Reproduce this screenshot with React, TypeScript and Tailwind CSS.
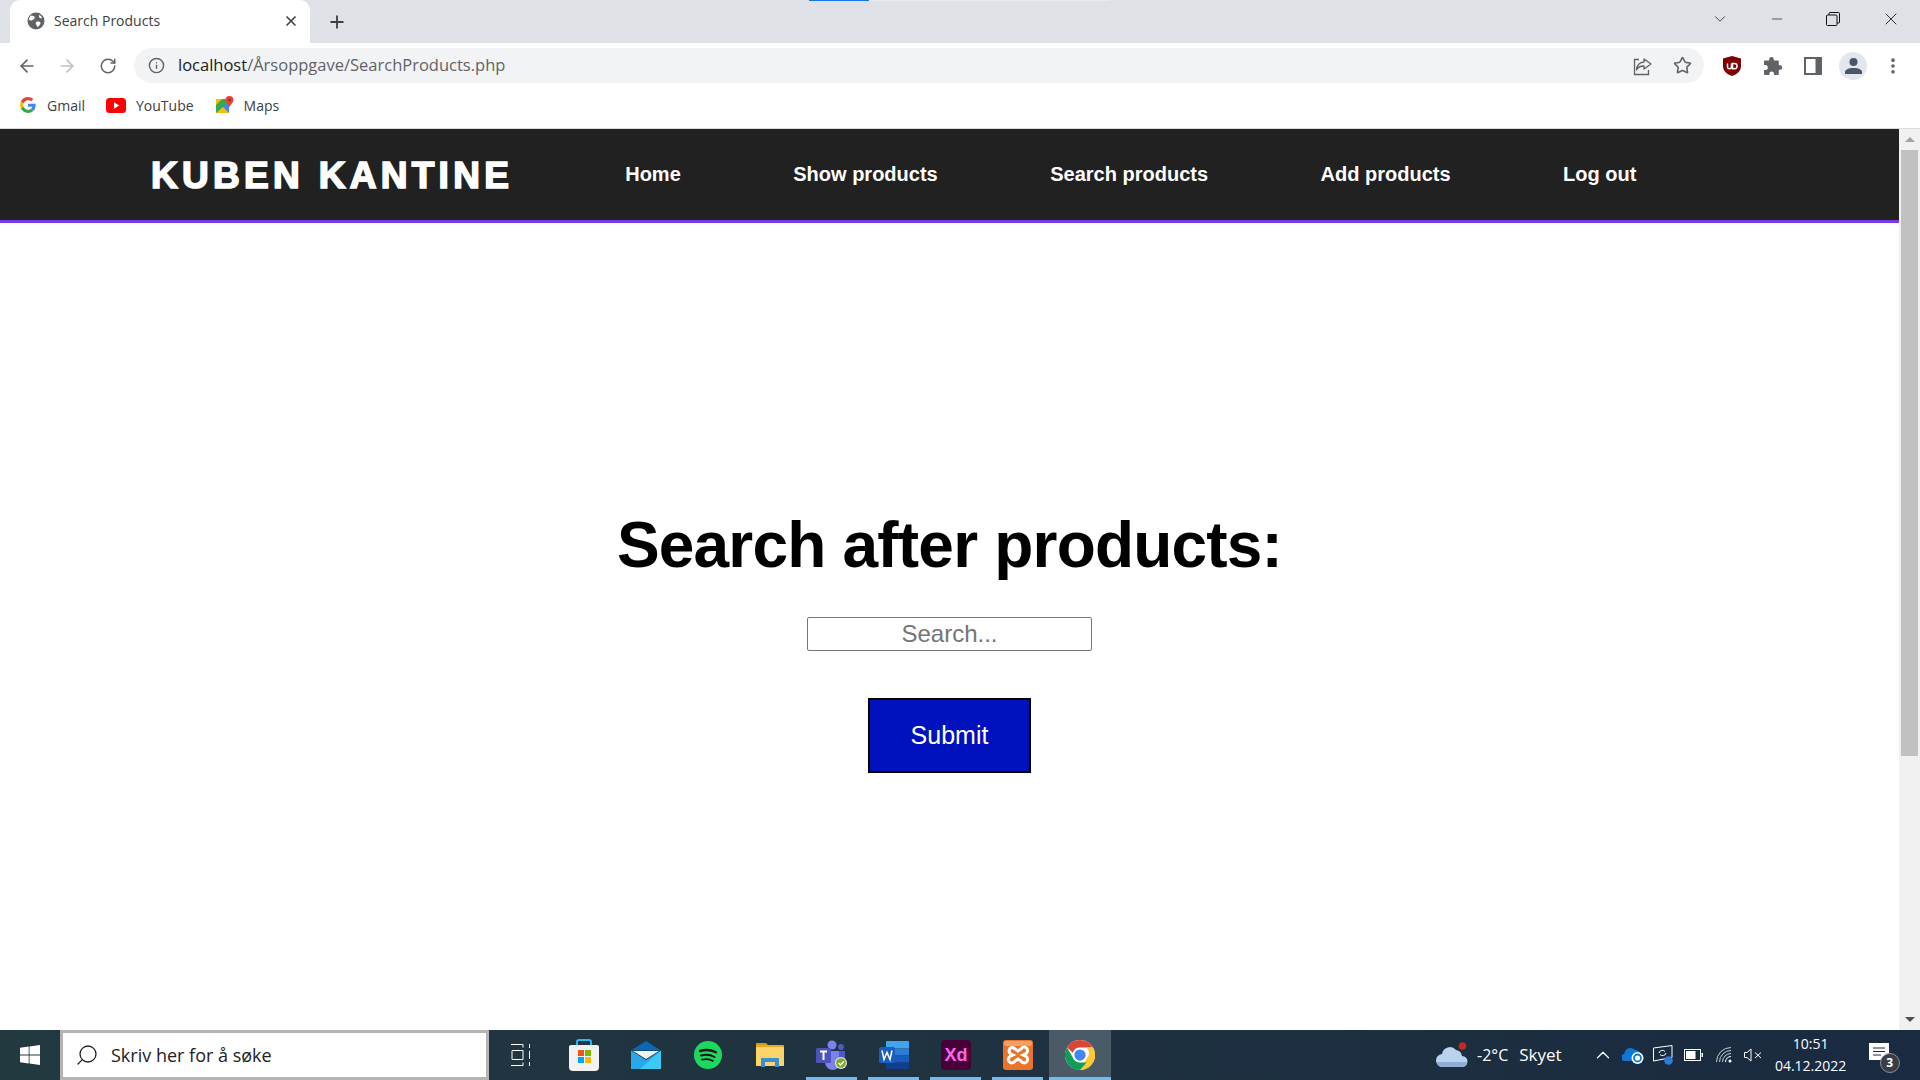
import { ArrowLeft, ArrowRight, RotateCw, Plus, X, Star, Info, ChevronDown, ChevronUp, Minus, MoreVertical, Search } from "lucide-react";

const uiFont = "font-['Open_Sans','Noto_Sans',sans-serif]";

function Globe() {
  return (
    <svg width="18" height="18" viewBox="0 0 18 18">
      <circle cx="9" cy="9" r="8.5" fill="#5f6368" />
      <path d="M4 3.5c2 .2 3.5.8 4 2-.3 1.400-1.600 1.500-2.500 2.500C4.600 9 3 8.500 1.800 7.500 2.200 5.800 3 4.500 4 3.500zM10 9.500c1.500-.3 3 .2 3.500 1.200 0 1.500-1.200 3.300-3 4.300-.8-1-1-2-1.500-3-.6-1 0-2 1-2.500zM12.500 2.800c1.200.7 2.200 2 2.600 3.400-1 .3-2 0-2.800-.8-.5-.8-.3-1.800.2-2.600z" fill="#fff" />
    </svg>
  );
}

function GoogleG() {
  return (
    <svg width="16" height="16" viewBox="0 0 48 48">
      <path fill="#EA4335" d="M24 9.500c3.500 0 6.700 1.200 9.200 3.600l6.900-6.900C35.900 2.400 30.500 0 24 0 14.600 0 6.500 5.400 2.600 13.200l8 6.200C12.500 13.700 17.800 9.500 24 9.500z" />
      <path fill="#4285F4" d="M47 24.500c0-1.600-.1-3.100-.4-4.500H24v9h12.900c-.6 3-2.200 5.500-4.700 7.200l7.700 6c4.500-4.200 7.100-10.300 7.100-17.700z" />
      <path fill="#FBBC05" d="M10.500 28.600c-.5-1.400-.8-3-.8-4.600s.3-3.200.8-4.600l-8-6.200C.9 16.500 0 20.100 0 24s.9 7.500 2.600 10.800l7.900-6.200z" />
      <path fill="#34A853" d="M24 48c6.500 0 11.900-2.100 15.900-5.800l-7.700-6c-2.100 1.400-4.900 2.300-8.200 2.300-6.200 0-11.500-4.200-13.400-9.900l-8 6.200C6.500 42.600 14.600 48 24 48z" />
    </svg>
  );
}

function YouTube() {
  return (
    <svg width="20" height="15" viewBox="0 0 20 15">
      <rect width="20" height="15" rx="3.500" fill="#f00" />
      <path d="M8 4.300v6.400l5.400-3.200z" fill="#fff" />
    </svg>
  );
}

function Maps() {
  return (
    <svg width="18" height="18" viewBox="0 0 18 18">
      <path d="M0 3h13v14H0z" fill="#34a853" />
      <path d="M0 3h6L0 9z" fill="#fbbc05" />
      <path d="M0 17l13-11v11z" fill="#4285f4" />
      <path d="M0 17l7-6 6 6z" fill="#fbbc05" />
      <path d="M13.500 0A4 4 0 0 0 9.500 4c0 2.500 3 4 4 7.500 1-3.500 4-5 4-7.500a4 4 0 0 0-4-4z" fill="#ea4335" />
      <circle cx="13.500" cy="4" r="1.400" fill="#a52714" />
    </svg>
  );
}

function Share() {
  return (
    <svg width="20" height="20" viewBox="0 0 20 20" fill="none" stroke="#5f6368" strokeWidth="1.300">
      <path d="M11 3l7 5-7 5v-3C7 10 4.500 11.500 3.500 14 3.500 9 7 6.200 11 6z" strokeLinejoin="round" />
      <path d="M6 3.500H1.500v15h14V14" />
    </svg>
  );
}

function UBlock() {
  return (
    <svg width="18" height="20" viewBox="0 0 18 20">
      <path d="M9 0l9 2.500V10c0 5-4 8.500-9 10-5-1.500-9-5-9-10V2.500z" fill="#800000" />
      <path d="M4.500 7.500v3.200a2 2 0 0 0 4 0V7.500M9.500 7.500h2a2.500 2.500 0 0 1 0 5.200h-2z" fill="none" stroke="#fff" strokeWidth="1.500" />
    </svg>
  );
}

function Puzzle() {
  return (
    <svg width="18" height="18" viewBox="0 0 18 18">
      <path d="M7.500 0a2.300 2.300 0 0 1 2.300 2.300V3.500H14a.8.800 0 0 1 .8.800v3.900H16a2.300 2.300 0 0 1 0 4.600h-1.200V17a1 1 0 0 1-1 1H10v-1.300a2.300 2.300 0 0 0-4.600 0V18H1a1 1 0 0 1-1-1v-4h1.300a2.500 2.500 0 0 0 0-5H0V4.300a.8.800 0 0 1 .8-.8h4.400V2.300A2.300 2.300 0 0 1 7.500 0z" fill="#5f6368" />
    </svg>
  );
}

function SidePanel() {
  return (
    <svg width="18" height="18" viewBox="0 0 18 18">
      <rect width="18" height="18" fill="#5f6368" />
      <rect x="2" y="2" width="9.500" height="14" fill="#fff" />
    </svg>
  );
}

function Avatar() {
  return (
    <div className="flex h-7 w-7 items-center justify-center rounded-full bg-[#e3e6ec]">
      <svg width="17" height="16" viewBox="0 0 17 16">
        <circle cx="8.500" cy="4" r="4" fill="#4a5568" />
        <path d="M0 16v-2c0-2.500 4-4 8.500-4s8.500 1.500 8.500 4v2z" fill="#4a5568" />
      </svg>
    </div>
  );
}

function Restore() {
  return (
    <svg width="14" height="14" viewBox="0 0 14 14" fill="none" stroke="#111" strokeWidth="1">
      <rect x="0.500" y="3" width="10.500" height="10.500" rx="1" />
      <path d="M3 3V1.500a1 1 0 0 1 1-1h8.500a1 1 0 0 1 1 1V10a1 1 0 0 1-1 1H11" />
    </svg>
  );
}

function WindowsLogo() {
  return (
    <svg width="20" height="20" viewBox="0 0 20 20" fill="#fff">
      <path d="M0 2.800l8.700-1.200v8H0zM9.500 1.500L20 0v9.600H9.500zM0 10.400h8.700v8L0 17.200zM9.500 10.400H20V20L9.500 18.500z" />
    </svg>
  );
}

function TaskView() {
  return (
    <svg width="20" height="22" viewBox="0 0 20 22" fill="none" stroke="#fff" strokeWidth="1">
      <path d="M0 .500h12M12 .500v3M1 6.500h11v9H1zM0 21.500h12v-3M18.500 0v4M18.500 7v8M18.500 18v4" />
    </svg>
  );
}

function Store() {
  return (
    <svg width="30" height="32" viewBox="0 0 30 32">
      <path d="M8 7V3a2 2 0 0 1 2-2h10a2 2 0 0 1 2 2v4" fill="none" stroke="#29b6f6" strokeWidth="2" />
      <path d="M2 6h26a2 2 0 0 1 2 2v20a4 4 0 0 1-4 4H4a4 4 0 0 1-4-4V8a2 2 0 0 1 2-2z" fill="#f2f2f2" />
      <rect x="9" y="11" width="6" height="6" fill="#f25022" />
      <rect x="16" y="11" width="6" height="6" fill="#7fba00" />
      <rect x="9" y="18" width="6" height="6" fill="#00a4ef" />
      <rect x="16" y="18" width="6" height="6" fill="#ffb900" />
    </svg>
  );
}

function Mail() {
  return (
    <svg width="30" height="28" viewBox="0 0 30 28">
      <path d="M15 0l15 9.500H0z" fill="#0a68b5" />
      <path d="M2 10h26L15 18z" fill="#eef2f5" />
      <path d="M0 9.500l15 9.500 15-9.500V28H0z" fill="#28a8ea" />
      <path d="M30 9.500V28H9z" fill="#3cc9f5" />
    </svg>
  );
}

function Spotify() {
  return (
    <svg width="28" height="28" viewBox="0 0 28 28" fill="none">
      <circle cx="14" cy="14" r="14" fill="#1ed760" />
      <path d="M6 10c5-1.500 11-1.200 16 1.300" stroke="#191414" strokeWidth="2.400" strokeLinecap="round" />
      <path d="M7 14.500c4.500-1.200 9.500-.8 13.500 1.500" stroke="#191414" strokeWidth="2" strokeLinecap="round" />
      <path d="M8 18.700c4-.9 8-.6 11 1.200" stroke="#191414" strokeWidth="1.700" strokeLinecap="round" />
    </svg>
  );
}

function Files() {
  return (
    <svg width="28" height="24" viewBox="0 0 28 24">
      <path d="M0 1a1 1 0 0 1 1-1h9l3 3H0z" fill="#d69a10" />
      <rect y="2" width="28" height="21" rx="1" fill="#e8a820" />
      <rect y="4" width="28" height="19" rx="1" fill="#fcd467" />
      <path d="M5 24v-9h18v9h-4v-5H9v5z" fill="#3a8ed4" />
    </svg>
  );
}

function Teams() {
  return (
    <svg width="32" height="30" viewBox="0 0 32 30">
      <circle cx="16" cy="5" r="4.500" fill="#7b83eb" />
      <circle cx="25" cy="7" r="3" fill="#5059c9" />
      <path d="M21 11h8v9a4 4 0 0 1-4 4h-4z" fill="#5059c9" />
      <path d="M9 11h14v13a6 6 0 0 1-6 6 8 8 0 0 1-8-8z" fill="#7b83eb" />
      <rect y="8" width="15" height="15" rx="1.500" fill="#4b53bc" />
      <path d="M4 11.500h7M7.500 11.500V20" stroke="#fff" strokeWidth="2" />
      <circle cx="25" cy="23" r="6" fill="#e3e8d5" />
      <circle cx="25" cy="23" r="4.800" fill="#7ea92c" />
      <path d="M22.500 23l2 2 3.200-3.500" fill="none" stroke="#fff" strokeWidth="1.300" />
    </svg>
  );
}

function Word() {
  return (
    <svg width="30" height="28" viewBox="0 0 30 28">
      <path d="M7 1a1 1 0 0 1 1-1h21a1 1 0 0 1 1 1v6.500H7z" fill="#41a5ee" />
      <rect x="7" y="7.500" width="23" height="7" fill="#2b7cd3" />
      <rect x="7" y="14.500" width="23" height="7" fill="#185abd" />
      <path d="M7 21.500h23V27a1 1 0 0 1-1 1H8a1 1 0 0 1-1-1z" fill="#103f91" />
      <rect y="6" width="16" height="16" rx="1.500" fill="#1b5ebe" />
      <path d="M3 9.500l2 9 3-7 3 7 2-9" fill="none" stroke="#fff" strokeWidth="1.500" />
    </svg>
  );
}

function AdobeXd() {
  return (
    <div className="flex h-[30px] w-[30px] items-center justify-center rounded-[4px] bg-[#470137] font-['Liberation_Sans',sans-serif] text-[18px] font-bold text-[#ff61f6]">
      Xd
    </div>
  );
}

function Xampp() {
  return (
    <svg width="30" height="30" viewBox="0 0 30 30">
      <rect width="30" height="30" rx="3" fill="#e9742a" />
      <rect x="1" y="1" width="28" height="5" rx="2" fill="#f3a067" />
      <path d="M9.500 7.500a3.500 3.500 0 0 0-2 6.300L10 15l-2.500 1.200a3.500 3.500 0 1 0 4.500 4.800l3-2 3 2a3.500 3.500 0 1 0 4.500-4.800L20 15l2.500-1.200A3.500 3.500 0 1 0 18 9l-3 2-3-2a3.500 3.500 0 0 0-2.500-1.500z" fill="none" stroke="#fff" strokeWidth="3" />
    </svg>
  );
}

function ChromeLogo() {
  return (
    <svg width="30" height="30" viewBox="0 0 48 48">
      <circle cx="24" cy="24" r="24" fill="#fff" />
      <path d="M24 0a24 24 0 0 1 20.800 12H24a12 12 0 0 0-11.400 8.200L3.200 12A24 24 0 0 1 24 0z" fill="#db4437" />
      <path d="M44.800 12A24 24 0 0 1 24 48l10.400-18a12 12 0 0 0 0-18z" fill="#fcc934" />
      <path d="M3.200 12L13.600 30A12 12 0 0 0 24 36h10.400L24 48A24 24 0 0 1 3.200 12z" fill="#0f9d58" />
      <circle cx="24" cy="24" r="11.500" fill="#fff" />
      <circle cx="24" cy="24" r="9" fill="#4285f4" />
    </svg>
  );
}

function Cloud() {
  return (
    <svg width="32" height="26" viewBox="0 0 32 26">
      <path d="M7 25a6.500 6.500 0 0 1-1-13A8 8 0 0 1 20 8a7 7 0 0 1 6 6 5.500 5.500 0 0 1 0 11z" fill="#b9d2ee" />
      <path d="M1 20h30a5 5 0 0 1-5 5H7a6 6 0 0 1-6-5z" fill="#90add3" />
      <circle cx="26.500" cy="4" r="3.700" fill="#c42b1c" />
    </svg>
  );
}

function OneDrive() {
  return (
    <svg width="22" height="20" viewBox="0 0 22 20">
      <path d="M3 16a3.500 3.500 0 0 1-.5-7A6 6 0 0 1 13 5a4.500 4.500 0 0 1 5 5l-4 6z" fill="#0f78d4" />
      <circle cx="15.500" cy="13" r="6" fill="#fff" />
      <circle cx="15.500" cy="13" r="3.500" fill="none" stroke="#0f78d4" strokeWidth="1.800" />
    </svg>
  );
}

function Display() {
  return (
    <svg width="20" height="20" viewBox="0 0 20 20" fill="none">
      <path d="M.500 3L19 .500v12L.500 16z" stroke="#fff" />
      <path d="M6 8a3.500 3.500 0 0 1 6-1.500M13 8a3.500 3.500 0 0 1-6 1.500" stroke="#fff" />
      <circle cx="15.500" cy="15.500" r="4.300" fill="#2d7cd6" />
    </svg>
  );
}

function Battery() {
  return (
    <svg width="19" height="12" viewBox="0 0 19 12">
      <rect x=".500" y=".500" width="16" height="11" fill="none" stroke="#fff" />
      <rect x="2" y="2" width="9.500" height="8" fill="#fff" />
      <rect x="17.500" y="4" width="1.500" height="4" fill="#fff" />
    </svg>
  );
}

function Wifi() {
  return (
    <svg width="16" height="16" viewBox="0 0 16 16" fill="none" stroke="#c9ced4" strokeWidth="1">
      <path d="M.500 15A14.500 14.500 0 0 1 15 .500" />
      <path d="M3.500 15A11.500 11.500 0 0 1 15 3.500" />
      <path d="M6.500 15A8.500 8.500 0 0 1 15 6.500" />
      <path d="M9.500 15A5.500 5.500 0 0 1 15 9.500" stroke="#fff" />
      <circle cx="14" cy="14" r="1.500" fill="#fff" stroke="none" />
    </svg>
  );
}

function Speaker() {
  return (
    <svg width="18" height="14" viewBox="0 0 18 14" fill="none" stroke="#fff" strokeWidth="1">
      <path d="M.500 4.500h2.500L7 1v12L3 9.500H.500z" />
      <path d="M11 4.500l6 5.500M17 4.500l-6 5.500" />
    </svg>
  );
}

function Chat() {
  return (
    <div className="relative h-[26px] w-[30px]">
      <svg width="20" height="17" viewBox="0 0 20 17" className="mt-[1px]">
        <path d="M0 0h20v17H0z" fill="#fff" />
        <path d="M4 5h12M4 8.500h12M4 12h8" stroke="#1a2a3f" strokeWidth="1" />
      </svg>
      <div className="absolute bottom-[-4px] right-[-1px] flex h-[20px] w-[20px] items-center justify-center rounded-full border border-[#8a8f96] bg-[#3a3e44] text-[12px] font-bold text-white">
        3
      </div>
    </div>
  );
}

const pinned = [
  { id: "store", icon: <Store />, open: false },
  { id: "mail", icon: <Mail />, open: false },
  { id: "spotify", icon: <Spotify />, open: false },
  { id: "files", icon: <Files />, open: false },
  { id: "teams", icon: <Teams />, open: true },
  { id: "word", icon: <Word />, open: true },
  { id: "xd", icon: <AdobeXd />, open: true },
  { id: "xampp", icon: <Xampp />, open: true },
];

const links = ["Home", "Show products", "Search products", "Add products", "Log out"];

export default function App() {
  return (
    <div className="flex h-[1080px] w-[1920px] flex-col overflow-hidden bg-white">
      {/* tab strip */}
      <div className="relative flex h-[43px] shrink-0 items-center bg-[#dee1e6]">
        <div className="absolute left-[809px] top-0 h-[1px] w-[60px] bg-[#1a73e8]" />
        <div className="absolute left-[869px] top-0 h-[1px] w-[241px] bg-[#e8eaed]" />
        <div className="ml-[10px] flex h-[43px] w-[300px] items-center rounded-t-[10px] bg-white pb-[1px] pl-[17px] pr-[11px]">
          <Globe />
          <span className={`ml-[9px] -mt-[1px] flex-1 text-[14px] text-[#3c4043] ${uiFont}`}>Search Products</span>
          <X size={16} strokeWidth={2.5} className="text-[#3c4043]" />
        </div>
        <Plus size={20} strokeWidth={2.2} className="ml-[17px] text-[#3c4043]" />
        <div className="mb-[6px] ml-auto mr-[19px] flex items-center text-[#111]">
          <ChevronDown size={18} strokeWidth={1} />
          <Minus size={16} strokeWidth={1} className="ml-[40px]" />
          <div className="ml-[41px]"><Restore /></div>
          <X size={20} strokeWidth={1} className="ml-[41px]" />
        </div>
      </div>

      {/* toolbar */}
      <div className="flex h-[45px] shrink-0 items-center bg-white pl-[17px]">
        <ArrowLeft size={20} className="text-[#5f6368]" />
        <ArrowRight size={20} className="ml-[20px] text-[#bdc1c6]" />
        <RotateCw size={18} className="ml-[22px] text-[#5f6368]" />
        <div className="ml-[17px] flex h-[35px] w-[1570px] items-center rounded-full bg-[#f1f3f4] pl-[14px] pr-[12px]">
          <Info size={17} className="text-[#5f6368]" />
          <span className={`ml-[13px] flex-1 text-[16.500px] text-[#5f6368] ${uiFont}`}>
            <span className="text-[#202124]">localhost</span>/Årsoppgave/SearchProducts.php
          </span>
          <Share />
          <Star size={19} strokeWidth={2} className="ml-[20px] text-[#5f6368]" />
        </div>
        <div className="ml-[19px]"><UBlock /></div>
        <div className="ml-[23px]"><Puzzle /></div>
        <div className="ml-[22px]"><SidePanel /></div>
        <div className="ml-[17px]"><Avatar /></div>
        <MoreVertical size={20} strokeWidth={2.4} className="ml-[16px] text-[#5f6368]" />
      </div>

      {/* bookmarks */}
      <div className={`flex h-[41px] shrink-0 items-center border-b border-[#d9dbde] bg-white pb-[6px] pl-[20px] text-[14px] text-[#3c4043] ${uiFont}`}>
        <GoogleG />
        <span className="ml-[11px]">Gmail</span>
        <div className="ml-[21px]"><YouTube /></div>
        <span className="ml-[10px]">YouTube</span>
        <div className="ml-[22px]"><Maps /></div>
        <span className="ml-[10px]">Maps</span>
      </div>

      <div className="flex min-h-0 flex-1">
        {/* page */}
        <div className="flex min-w-0 flex-1 flex-col font-['Liberation_Sans',Arial,sans-serif]">
          <nav className="flex h-[94px] shrink-0 items-center border-b-[3px] border-[#7b3ae8] bg-[#212121] pl-[151px] text-white">
            <div className="pt-[3px] text-[37px] font-bold tracking-[4.300px] [-webkit-text-stroke:1.700px_white]">KUBEN KANTINE</div>
            <ul className="ml-[112px] flex gap-[112.500px] pb-[2px] text-[20px] font-bold">
              {links.map((link) => (
                <li key={link}>{link}</li>
              ))}
            </ul>
          </nav>
          <main className="flex flex-col items-center pt-[285px]">
            <h1 className="text-[64px] leading-[74px] font-bold tracking-[-0.800px] text-black">Search after products:</h1>
            <input
              placeholder="Search..."
              className="mt-[35px] h-[34px] w-[285px] rounded-[2px] border border-[#767676] text-center text-[24px] placeholder:text-[#757575]"
            />
            <button className="mt-[47px] h-[75px] w-[163px] border-[2px] border-black bg-[#0012bd] text-[25px] text-white">
              Submit
            </button>
          </main>
        </div>

        {/* scrollbar */}
        <div className="flex w-[21px] shrink-0 flex-col items-center bg-[#f1f1f1]">
          <div className="flex h-[21px] shrink-0 items-center justify-center">
            <div className="h-0 w-0 border-x-[5px] border-b-[5px] border-x-transparent border-b-[#a3a3a3]" />
          </div>
          <div className="h-[606px] w-[17px] bg-[#c1c1c1]" />
          <div className="mt-auto flex h-[21px] shrink-0 items-center justify-center">
            <div className="h-0 w-0 border-x-[5px] border-t-[5px] border-x-transparent border-t-[#505050]" />
          </div>
        </div>
      </div>

      {/* taskbar */}
      <div className={`flex h-[50px] shrink-0 bg-gradient-to-r from-[#21393f] via-[#1f3240] to-[#1a2a40] text-white ${uiFont}`}>
        <div className="flex w-[60px] items-center justify-center"><WindowsLogo /></div>
        <div className="flex w-[429px] items-center border-[3px] border-[#b4b4b4] bg-white pl-[12px] text-[18px] text-[#222]">
          <Search size={24} strokeWidth={1.300} className="-scale-x-100" />
          <span className="ml-[12px]">Skriv her for å søke</span>
        </div>
        <div className="flex w-[64px] items-center justify-center"><TaskView /></div>
        {pinned.map((app) => (
          <div key={app.id} className="relative flex w-[62px] items-center justify-center">
            {app.icon}
            {app.open && <div className="absolute bottom-0 left-[5px] right-[6px] h-[3px] bg-[#76b9ed]" />}
          </div>
        ))}
        <div className="relative flex w-[62px] items-center justify-center bg-[#4a5a66]">
          <ChromeLogo />
          <div className="absolute inset-x-0 bottom-0 h-[3px] bg-[#76b9ed]" />
        </div>
        <div className="ml-[325px] flex items-center">
          <Cloud />
          <span className="ml-[9px] text-[16px]">-2°C</span>
          <span className="ml-[11px] text-[17px]">Skyet</span>
          <ChevronUp size={22} strokeWidth={1.300} className="ml-[30px]" />
          <div className="ml-[8px]"><OneDrive /></div>
          <div className="ml-[9px]"><Display /></div>
          <div className="ml-[11px]"><Battery /></div>
          <div className="ml-[13px]"><Wifi /></div>
          <div className="ml-[12px]"><Speaker /></div>
          <div className="ml-[13px] flex w-[72px] flex-col items-center text-[14px] leading-[22px]">
            <span>10:51</span>
            <span>04.12.2022</span>
          </div>
          <div className="ml-[22px]"><Chat /></div>
        </div>
      </div>
    </div>
  );
}
